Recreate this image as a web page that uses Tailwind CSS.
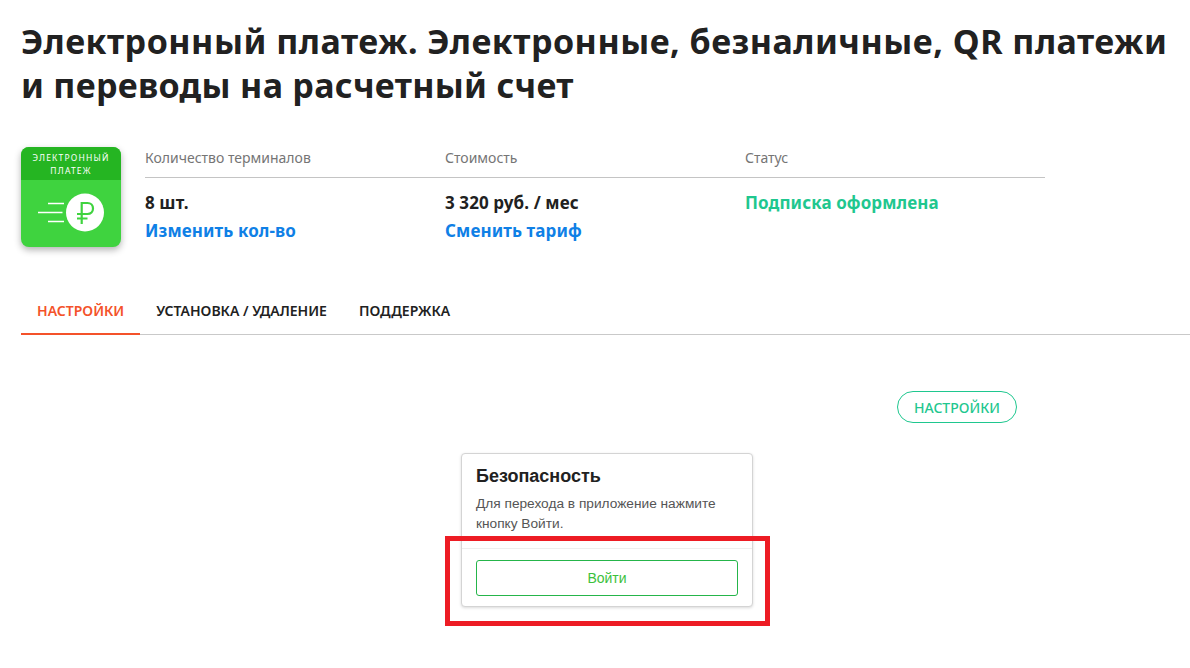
<!DOCTYPE html>
<html lang="ru">

<head>
    <meta charset="UTF-8">
    <meta name="viewport" content="width=device-width, initial-scale=1.0">
    <script src="https://cdn.jsdelivr.net/npm/@tailwindcss/browser@4"></script>
    <title>Электронный платеж</title>
</head>

<body class="bg-white font-['Noto_Sans',sans-serif] text-[#212121] overflow-hidden">
    <div class="relative h-[668px] w-[1190px] pl-[21px]">
        <!-- Title -->
        <h1 class="pt-[19px] pb-[1px] text-[34px] leading-[44px] font-bold tracking-[0.3px] whitespace-nowrap">
            <span class="tracking-[0.5px]">Электронный платеж. Электронные, безналичные, QR платежи</span><br>и переводы на расчетный счет
        </h1>

        <!-- App info -->
        <div class="mt-[39px] flex">
            <div class="h-[100px] w-[100px] shrink-0 overflow-hidden rounded-[8px] bg-[#3fd33f] shadow-[0_3px_7px_rgba(0,0,0,0.3)]">
                <div class="flex h-[33px] flex-col items-center justify-center bg-[#25b522] text-[8.500px] leading-[13px] font-normal tracking-[1.200px] text-white">
                    <span>ЭЛЕКТРОННЫЙ</span>
                    <span>ПЛАТЕЖ</span>
                </div>
                <svg class="mt-[13px] ml-[16px]" width="68" height="40" viewBox="0 0 68 40" fill="none">
                    <path d="M11 10.500H27M1 19.500H25.500M11 28.500H27" stroke="white" stroke-width="1.500" />
                    <circle cx="48" cy="19.500" r="19" fill="white" />
                    <path d="M44.700 31V10H50.500C53.800 10 56 12.300 56 15.500C56 18.700 53.800 21 50.500 21H40M40 25.500H50.500" stroke="#3fd33f" stroke-width="2.200" />
                </svg>
            </div>
            <div class="ml-[24px] w-[900px]">
                <div class="flex h-[31px] border-b border-[#c4c4c4] text-[14px] leading-[22px] text-[#757575]">
                    <div class="w-[300px]">Количество терминалов</div>
                    <div class="w-[300px]">Стоимость</div>
                    <div>Статус</div>
                </div>
                <div class="flex pt-[11px] pb-[1px] text-[17px] leading-[28px] font-bold tracking-[0.1px]">
                    <div class="w-[300px]">
                        <div>8 шт.</div>
                        <a href="#" class="text-[#0f80e6]">Изменить кол-во</a>
                    </div>
                    <div class="w-[300px]">
                        <div>3 320 руб. / мес</div>
                        <a href="#" class="text-[#0f80e6]">Сменить тариф</a>
                    </div>
                    <div class="text-[#1fc78f]">Подписка оформлена</div>
                </div>
            </div>
        </div>

        <!-- Tabs -->
        <div class="mt-[39px] flex h-[49px] border-b border-[#c9c9c9] text-[14px] leading-[50px] font-semibold">
            <a href="#" class="h-[49px] border-b-2 border-[#f4522a] px-[16px] text-[#f4522a]">НАСТРОЙКИ</a>
            <a href="#" class="px-[16px]">УСТАНОВКА / УДАЛЕНИЕ</a>
            <a href="#" class="px-[16px]">ПОДДЕРЖКА</a>
        </div>

        <div class="mt-[56px] flex justify-end pr-[173px]">
            <button class="h-[32px] w-[120px] rounded-full border border-[#1fc78f] text-[14px] font-medium text-[#1fc78f]">НАСТРОЙКИ</button>
        </div>

        <!-- Security card -->
        <div class="mt-[30px] ml-[440px] w-[292px] rounded-[4px] border border-[#d4d4d4] bg-white font-['Liberation_Sans',sans-serif] shadow-[0_1px_3px_rgba(0,0,0,0.15)]">
            <div class="h-[95px] border-b border-[#eeeeee] px-[14px] pt-[11px]">
                <div class="text-[18px] leading-[22px] font-bold text-[#212121]">Безопасность</div>
                <p class="mt-[7px] text-[13.700px] leading-[20px] text-[#555555]">Для перехода в приложение нажмите кнопку Войти.</p>
            </div>
            <div class="px-[14px] pt-[11px] pb-[10px]">
                <button class="h-[36px] w-full rounded-[3px] border border-[#25b54a] text-[14px] text-[#3cc13c]">Войти</button>
            </div>
        </div>

        <!-- Red annotation frame -->
        <div class="absolute top-[536px] left-[445px] h-[90px] w-[325px] border-[5px] border-[#ed1c24]"></div>
    </div>
</body>

</html>
